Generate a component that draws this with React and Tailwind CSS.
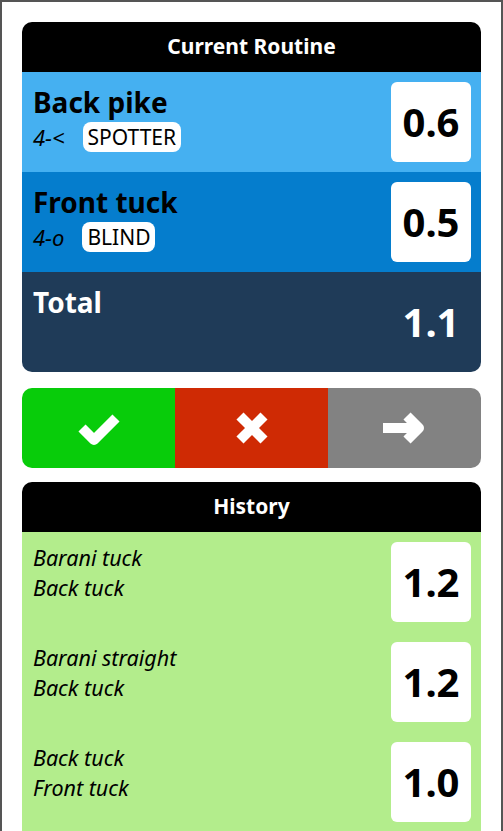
const routine = [
  { name: "Back pike", code: "4-<", tag: "SPOTTER", score: "0.6", bg: "bg-[#45b0f1]" },
  { name: "Front tuck", code: "4-o", tag: "BLIND", score: "0.5", bg: "bg-[#057dcd]" },
];

const history = [
  { skills: ["Barani tuck", "Back tuck"], score: "1.2" },
  { skills: ["Barani straight", "Back tuck"], score: "1.2" },
  { skills: ["Back tuck", "Front tuck"], score: "1.0" },
];

function CheckIcon() {
  return (
    <svg width="44" height="34" viewBox="0 0 44 34" fill="none">
      <polyline points="5,17 17,29 39,7" stroke="white" strokeWidth="10" strokeLinejoin="round" />
    </svg>
  );
}

function CrossIcon() {
  return (
    <svg width="34" height="34" viewBox="0 0 34 34" fill="none">
      <line x1="5" y1="5" x2="29" y2="29" stroke="white" strokeWidth="10" />
      <line x1="29" y1="5" x2="5" y2="29" stroke="white" strokeWidth="10" />
    </svg>
  );
}

function ArrowIcon() {
  return (
    <svg width="44" height="34" viewBox="0 0 44 34" fill="none">
      <line x1="0" y1="17" x2="34" y2="17" stroke="white" strokeWidth="10" />
      <polyline points="24,5 36,17 24,29" stroke="white" strokeWidth="10" strokeLinejoin="round" />
    </svg>
  );
}

function ScoreBox({ value, light = true }) {
  return (
    <div
      className={`w-[80px] h-[80px] shrink-0 rounded-[6px] flex items-center justify-center text-[40px] font-bold ${
        light ? "bg-white text-black" : "text-white"
      }`}
    >
      {value}
    </div>
  );
}

export default function App() {
  return (
    <div
      className="min-h-screen bg-white border-2 border-b-0 border-[#555555] px-[20px] pt-[20px] pb-[20px]"
      style={{ fontFamily: '"Noto Sans", "Open Sans", sans-serif' }}
    >
      {/* Current routine */}
      <div className="rounded-[10px] overflow-hidden">
        <div className="h-[50px] bg-black text-white font-bold text-[21px] flex items-center justify-center">
          Current Routine
        </div>
        {routine.map((skill) => (
          <div key={skill.name} className={`${skill.bg} h-[100px] p-[10px] flex justify-between`}>
            <div className="pl-[1px]">
              <div className="text-[28px] font-bold leading-[40px] text-black">{skill.name}</div>
              <div className="flex items-center gap-[18px] leading-[30px] text-black">
                <span className="italic text-[22px]">{skill.code}</span>
                <span className="inline-block bg-white rounded-[8px] px-[5px] text-[21px] leading-[30px]">
                  {skill.tag}
                </span>
              </div>
            </div>
            <ScoreBox value={skill.score} />
          </div>
        ))}
        <div className="bg-[#1f3b58] h-[100px] p-[10px] flex justify-between">
          <div className="pl-[1px] text-[28px] font-bold leading-[40px] text-white">Total</div>
          <ScoreBox value="1.1" light={false} />
        </div>
      </div>

      {/* Actions */}
      <div className="mt-[16px] h-[80px] rounded-[10px] overflow-hidden grid grid-cols-3">
        <button className="bg-[#08cc0a] flex items-center justify-center">
          <CheckIcon />
        </button>
        <button className="bg-[#cf2a04] flex items-center justify-center">
          <CrossIcon />
        </button>
        <button className="bg-[#828282] flex items-center justify-center">
          <ArrowIcon />
        </button>
      </div>

      {/* History */}
      <div className="mt-[14px] rounded-t-[10px] overflow-hidden">
        <div className="h-[50px] bg-black text-white font-bold text-[21px] flex items-center justify-center">
          History
        </div>
        {history.map((item, i) => (
          <div key={i} className="bg-[#b3ed8c] h-[100px] p-[10px] flex justify-between">
            <div className="pl-[1px] pt-[1px] italic text-[21.5px] leading-[30px] text-black">
              {item.skills.map((s) => (
                <div key={s}>{s}</div>
              ))}
            </div>
            <ScoreBox value={item.score} />
          </div>
        ))}
      </div>
    </div>
  );
}
